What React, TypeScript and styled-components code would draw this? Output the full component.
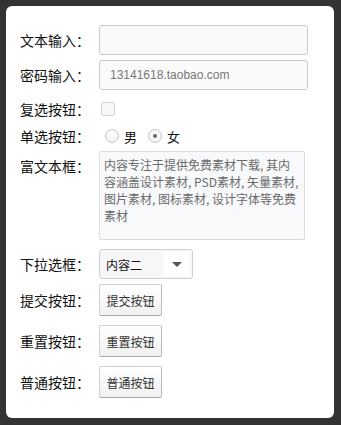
import styled, { createGlobalStyle } from "styled-components";

const GlobalStyle = createGlobalStyle`
	html, body {
		margin: 0;
		padding: 0;
		background: #333333;
	}
	body {
		font-family: "Noto Sans CJK SC", "Noto Sans", sans-serif;
	}
	* {
		box-sizing: border-box;
	}
`;

const FONT_CJK = `"Noto Sans CJK SC", "Noto Sans", sans-serif`;
const FONT_LATIN = `"Liberation Sans", Arial, sans-serif`;

const Card = styled.div`
	margin: 6px;
	width: 328px;
	height: 412px;
	background: #ffffff;
	border-radius: 6px;
	padding: 19px 14px 20px;
	display: flex;
	flex-direction: column;
`;

const Row = styled.div<{ $top?: number; $height?: number; $alignTop?: boolean }>`
	display: flex;
	align-items: ${(p) => (p.$alignTop ? "flex-start" : "center")};
	margin-top: ${(p) => p.$top ?? 0}px;
	min-height: ${(p) => p.$height ?? 0}px;
`;

const Label = styled.label<{ $padTop?: number }>`
	flex: 0 0 79px;
	font-family: ${FONT_CJK};
	font-size: 14px;
	line-height: 20px;
	color: #111111;
	padding-top: ${(p) => p.$padTop ?? 0}px;
	white-space: nowrap;
`;

const TextInput = styled.input`
	width: 209px;
	height: 30px;
	border: 1px solid #c9c9c9;
	border-radius: 3px;
	background: #fafafa;
	padding: 0 10px;
	font-family: ${FONT_LATIN};
	font-size: 12px;
	color: #777777;
	outline: none;
`;

const CheckBox = styled.input`
	appearance: none;
	width: 14px;
	height: 14px;
	margin: 0 0 0 2px;
	border: 1px solid #d6d6d6;
	border-radius: 2px;
	background: #f7f7f7;
`;

const RadioGroup = styled.div`
	display: flex;
	align-items: center;
`;

const RadioOption = styled.label`
	display: flex;
	align-items: center;
	font-family: ${FONT_CJK};
	font-size: 13px;
	color: #111111;
	margin-left: 6px;
	margin-right: 5px;
`;

const Radio = styled.input`
	appearance: none;
	width: 14px;
	height: 14px;
	margin: 0 5px 0 0;
	border-radius: 50%;
	border: 1px solid #c6c6c6;
	background: radial-gradient(circle at 50% 40%, #ffffff 0%, #f2f2f2 70%, #e2e2e2 100%);
	position: relative;

	&:checked::after {
		content: "";
		position: absolute;
		left: 4px;
		top: 4px;
		width: 4px;
		height: 4px;
		border-radius: 50%;
		background: #666666;
	}
`;

const TextArea = styled.textarea`
	width: 206px;
	height: 89px;
	border: 1px solid #d8dce3;
	border-radius: 2px;
	background: #f8f9fb;
	padding: 4px 3.5px 4px 4px;
	font-family: ${FONT_CJK};
	font-size: 12px;
	line-height: 17px;
	color: #6a6a6a;
	resize: none;
	outline: none;
`;

const Select = styled.div`
	width: 94px;
	height: 30px;
	border: 1px solid #cfcfcf;
	border-radius: 3px;
	display: flex;
	align-items: stretch;
	background: #f7f7f7;
	overflow: hidden;
`;

const SelectValue = styled.span`
	flex: 1;
	display: flex;
	align-items: center;
	padding-left: 6px;
	font-family: ${FONT_CJK};
	font-size: 12px;
	color: #111111;
`;

const SelectArrow = styled.span`
	flex: 0 0 26px;
	margin: 2px 2px 2px 0;
	background: #ffffff;
	border-radius: 2px;
	display: flex;
	align-items: center;
	justify-content: center;

	&::after {
		content: "";
		border-left: 5px solid transparent;
		border-right: 5px solid transparent;
		border-top: 5px solid #555555;
	}
`;

const Button = styled.button`
	width: 63px;
	height: 32px;
	border: 1px solid #d2d2d2;
	border-bottom-color: #a9a9a9;
	border-right-color: #bdbdbd;
	border-radius: 2px;
	background: linear-gradient(#ffffff, #f1f1f1);
	font-family: ${FONT_CJK};
	font-size: 12px;
	color: #333333;
	padding: 0;
`;

const App = (): JSX.Element => {
	return (
		<>
			<GlobalStyle />
			<Card>
				<Row $height={30}>
					<Label>文本输入：</Label>
					<TextInput type="text" />
				</Row>
				<Row $top={5} $height={30}>
					<Label>密码输入：</Label>
					<TextInput type="text" defaultValue="13141618.taobao.com" />
				</Row>
				<Row $top={6} $height={26}>
					<Label>复选按钮：</Label>
					<CheckBox type="checkbox" />
				</Row>
				<Row $top={4} $height={20}>
					<Label>单选按钮：</Label>
					<RadioGroup>
						<RadioOption>
							<Radio type="radio" name="sex" />男
						</RadioOption>
						<RadioOption>
							<Radio type="radio" name="sex" defaultChecked />女
						</RadioOption>
					</RadioGroup>
				</Row>
				<Row $top={5} $alignTop>
					<Label $padTop={5}>富文本框：</Label>
					<TextArea defaultValue="内容专注于提供免费素材下载, 其内容涵盖设计素材, PSD素材, 矢量素材, 图片素材, 图标素材, 设计字体等免费素材" />
				</Row>
				<Row $top={9} $height={30}>
					<Label>下拉选框：</Label>
					<Select>
						<SelectValue>内容二</SelectValue>
						<SelectArrow />
					</Select>
				</Row>
				<Row $top={5} $height={32}>
					<Label>提交按钮：</Label>
					<Button type="submit">提交按钮</Button>
				</Row>
				<Row $top={9} $height={32}>
					<Label>重置按钮：</Label>
					<Button type="reset">重置按钮</Button>
				</Row>
				<Row $top={9} $height={32}>
					<Label>普通按钮：</Label>
					<Button type="button">普通按钮</Button>
				</Row>
			</Card>
		</>
	);
};

export default App;
